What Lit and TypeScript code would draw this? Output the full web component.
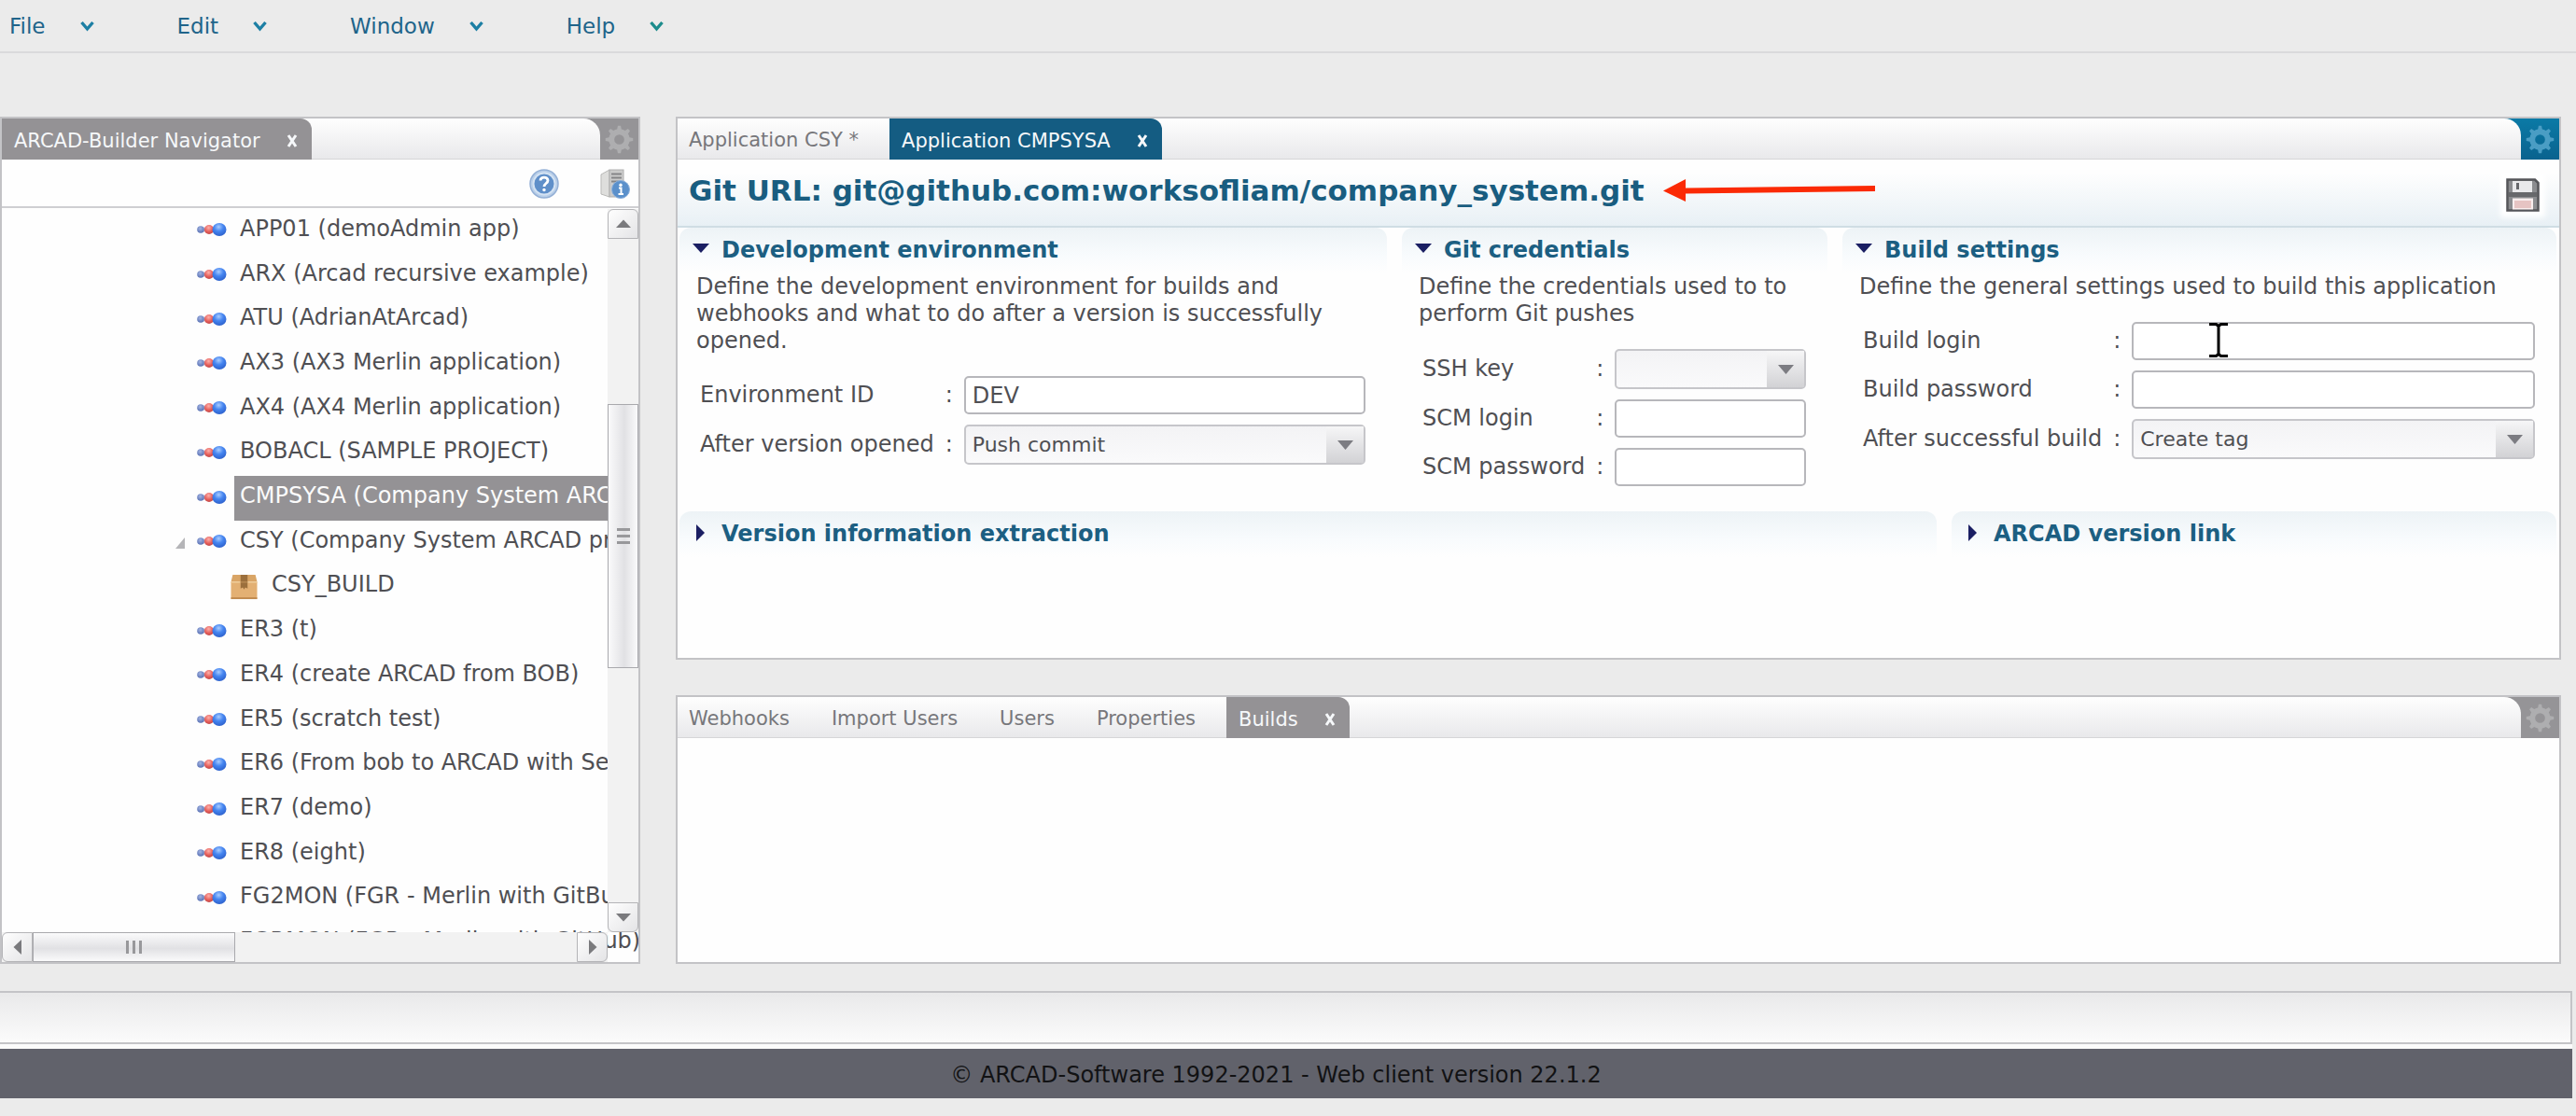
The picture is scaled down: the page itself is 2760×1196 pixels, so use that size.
import { LitElement, html, css, svg, nothing } from "lit";
import { customElement, property } from "lit/decorators.js";

const menus = ["File", "Edit", "Window", "Help"];

type Node = { label: string; icon: "app" | "box"; selected?: boolean; open?: boolean };

const nodes: Node[] = [
  { label: "APP01 (demoAdmin app)", icon: "app" },
  { label: "ARX (Arcad recursive example)", icon: "app" },
  { label: "ATU (AdrianAtArcad)", icon: "app" },
  { label: "AX3 (AX3 Merlin application)", icon: "app" },
  { label: "AX4 (AX4 Merlin application)", icon: "app" },
  { label: "BOBACL (SAMPLE PROJECT)", icon: "app" },
  { label: "CMPSYSA (Company System ARCAD)", icon: "app", selected: true },
  { label: "CSY (Company System ARCAD project)", icon: "app", open: true },
  { label: "CSY_BUILD", icon: "box" },
  { label: "ER3 (t)", icon: "app" },
  { label: "ER4 (create ARCAD from BOB)", icon: "app" },
  { label: "ER5 (scratch test)", icon: "app" },
  { label: "ER6 (From bob to ARCAD with Services)", icon: "app" },
  { label: "ER7 (demo)", icon: "app" },
  { label: "ER8 (eight)", icon: "app" },
  { label: "FG2MON (FGR - Merlin with GitBucket)", icon: "app" },
  { label: "FGRMON (FGR - Merlin with GitHub)", icon: "app" },
];

const gearTeeth = [0, 45, 90, 135, 180, 225, 270, 315];

const gearIcon = html`<svg class="gear" viewBox="0 0 32 32" aria-hidden="true">
  <circle cx="16" cy="16" r="8.5" fill="none" stroke="currentColor" stroke-width="6"></circle>
  ${gearTeeth.map(
    (a) => svg`<path d="M13.4 6 L14.4 0.8 H17.6 L18.6 6 Z" fill="currentColor" transform="rotate(${a} 16 16)"></path>`
  )}
</svg>`;

const closeIcon = html`<svg class="close" viewBox="0 0 12 14" aria-hidden="true">
  <path d="M2 1 L10 13 M10 1 L2 13" stroke="currentColor" stroke-width="3" fill="none"></path>
</svg>`;

const appIcon = html`<svg class="app-icon" viewBox="0 0 32 18" aria-hidden="true">
  <defs>
    <radialGradient id="blue" cx=".45" cy=".3" r=".75">
      <stop offset="0" stop-color="#a9ccff"></stop>
      <stop offset=".45" stop-color="#4585f0"></stop>
      <stop offset="1" stop-color="#2a5cc8"></stop>
    </radialGradient>
    <radialGradient id="red" cx=".45" cy=".3" r=".75">
      <stop offset="0" stop-color="#ffb0aa"></stop>
      <stop offset=".6" stop-color="#e45c58"></stop>
      <stop offset="1" stop-color="#b84446"></stop>
    </radialGradient>
    <radialGradient id="navy" cx=".45" cy=".35" r=".75">
      <stop offset="0" stop-color="#a3b4e2"></stop>
      <stop offset="1" stop-color="#4c65ac"></stop>
    </radialGradient>
  </defs>
  <rect x="4" y="6.500" width="20" height="5" fill="#cbbcd2"></rect>
  <circle cx="4" cy="9" r="3.800" fill="url(#navy)"></circle>
  <circle cx="13" cy="9" r="5" fill="url(#red)"></circle>
  <ellipse cx="24" cy="9" rx="7.500" ry="7" fill="url(#blue)"></ellipse>
</svg>`;

const boxIcon = html`<svg class="box-icon" viewBox="0 0 32 30" aria-hidden="true">
  <path d="M3 1 H29 L31 9 H1 Z" fill="#d9a566"></path>
  <rect x="1" y="9" width="30" height="20" rx="1" fill="#e3b073"></rect>
  <path d="M1 9.5 H31" stroke="#f0cd9b" stroke-width="1.5"></path>
  <path d="M1 28 H31" stroke="#bf884c" stroke-width="2"></path>
  <path d="M12 1 H20 V17 L17.500 15.500 L16 18 L14.500 15.500 L12 17 Z" fill="#9b6f3c"></path>
  <path d="M12 9.500 H20" stroke="#b98a52" stroke-width="1.500"></path>
</svg>`;

const helpIcon = html`<svg class="tool-icon" viewBox="0 0 32 32" aria-hidden="true">
  <circle cx="16" cy="16" r="15" fill="#b9cfe9" stroke="#94b0d6" stroke-width="1.5"></circle>
  <circle cx="16" cy="16" r="11.5" fill="#5f8fc9" stroke="#d5e3f3" stroke-width="2"></circle>
  <path d="M12 12.5 C12 8 20 8 20 12.5 C20 15.5 16 15.5 16 19" fill="none" stroke="#fff" stroke-width="2.8"></path>
  <circle cx="16" cy="22.5" r="1.7" fill="#fff"></circle>
</svg>`;

const serverIcon = html`<svg class="tool-icon" viewBox="0 0 32 32" aria-hidden="true">
  <path d="M1 6 L10 1 V30 L1 27 Z" fill="#dededc" stroke="#b9b9b7"></path>
  <rect x="10" y="1" width="15" height="29" fill="#cbcbcb" stroke="#adadad"></rect>
  <path d="M12 5.500 H23 M12 9.500 H23 M12 13.500 H23" stroke="#858587" stroke-width="1.800"></path>
  <circle cx="22" cy="22" r="9.500" fill="#5b90cb" stroke="#8db1dc" stroke-width="1"></circle>
  <circle cx="22" cy="17.300" r="1.700" fill="#fff"></circle>
  <path d="M20 20.500 H22.500 V26.500 M19.500 27 H25" stroke="#fff" stroke-width="2" fill="none"></path>
</svg>`;

const saveIcon = html`<svg class="save-icon" viewBox="0 0 36 36" aria-hidden="true">
  <path d="M1.500 1.500 H31 L34.500 5 V34.500 H1.500 Z" fill="#8b8c8f" stroke="#55565a" stroke-width="2.500"></path>
  <path d="M3 15 H33 V20 H3 Z" fill="#67686b"></path>
  <rect x="7" y="3" width="21" height="12" fill="#e9e9eb"></rect>
  <rect x="11" y="5" width="3" height="7" fill="#66676b"></rect>
  <rect x="7" y="21.500" width="22" height="12" fill="#f8eeee"></rect>
  <rect x="9" y="24" width="18" height="8" fill="#e6c4c3"></rect>
</svg>`;

const shared = css`
  :host {
    display: block;
    min-width: 0;
    min-height: 0;
    font-family: "DejaVu Sans", Verdana, sans-serif;
    color: #4f4f53;
  }
  * {
    box-sizing: border-box;
  }
  button {
    font: inherit;
    color: inherit;
    background: none;
    border: 0;
    margin: 0;
    padding: 0;
  }
  svg {
    display: block;
    flex: none;
  }
`;

@customElement("tab-panel")
export class TabPanel extends LitElement {
  @property({ attribute: false }) tabs: string[] = [];
  @property() active = "";
  @property({ type: Boolean, reflect: true }) focused = false;

  static styles = [
    shared,
    css`
      :host {
        display: flex;
        flex-direction: column;
        background: #fefefe;
        border: 2px solid #c3c3c6;
        --tone: #949295;
        --corner: #959497;
        --gear: #aeaeb0;
      }
      :host([focused]) {
        --tone: #145c82;
        --corner: linear-gradient(#0b7aa6, #0a628e);
        --gear: #4a9dc4;
      }
      .bar {
        display: flex;
        flex: none;
        height: 44px;
        background: var(--corner);
      }
      .strip {
        display: flex;
        flex: 1;
        min-width: 0;
        background: linear-gradient(#fefefe, #e9e9eb);
        border-bottom: 1px solid #d6d6d8;
        border-top-right-radius: 18px;
      }
      .tab {
        height: 44px;
        padding: 2px 33px 0 12px;
        font-size: 21px;
        color: #77777b;
        white-space: nowrap;
      }
      .current {
        display: flex;
        align-items: center;
        gap: 28px;
        height: 44px;
        padding: 4px 15px 0 13px;
        background: var(--tone);
        border-top-right-radius: 12px;
        color: #f6f8fa;
        font-size: 21px;
        white-space: nowrap;
      }
      .close {
        width: 12px;
        height: 14px;
      }
      .corner {
        display: grid;
        place-items: center;
        width: 41px;
        height: 44px;
        color: var(--gear);
      }
      .gear {
        width: 31px;
        height: 31px;
      }
      .body {
        flex: 1;
        display: flex;
        flex-direction: column;
        min-height: 0;
      }
    `,
  ];

  render() {
    return html`
      <div class="bar">
        <div class="strip" role="tablist">
          ${this.tabs.map((t) =>
            t === this.active
              ? html`<div class="current">
                  <button role="tab" aria-selected="true">${t}</button>
                  <button aria-label="Close ${t}">${closeIcon}</button>
                </div>`
              : html`<button class="tab" role="tab" aria-selected="false">${t}</button>`
          )}
        </div>
        <button class="corner" aria-label="Configure">${gearIcon}</button>
      </div>
      <div class="body"><slot></slot></div>
    `;
  }
}

@customElement("app-tree")
export class AppTree extends LitElement {
  static styles = [
    shared,
    css`
      :host {
        display: flex;
        flex-direction: column;
        flex: 1;
      }
      .tools {
        display: flex;
        flex: none;
        justify-content: flex-end;
        align-items: center;
        gap: 44px;
        height: 52px;
        padding: 2px 9px 0 0;
        border-bottom: 2px solid #cfcfd2;
      }
      .tool-icon {
        width: 32px;
        height: 32px;
      }
      .view {
        position: relative;
        flex: 1;
        min-height: 0;
        overflow: hidden;
      }
      .list {
        display: grid;
        grid-auto-rows: 1fr;
        height: calc(100% + 4px);
        margin: 0;
        padding: 1px 0 0;
        list-style: none;
        font-size: 24px;
      }
      .node {
        display: flex;
        align-items: center;
        min-height: 0;
        padding-left: 186px;
        white-space: nowrap;
      }
      .twist {
        width: 10px;
        height: 12px;
        margin-right: 13px;
      }
      .child {
        padding-left: 221px;
      }
      .app-icon {
        width: 32px;
        height: 18px;
        margin-bottom: 3px;
      }
      .box-icon {
        width: 31px;
        height: 28px;
      }
      .label {
        display: flex;
        align-items: center;
        align-self: stretch;
        flex: 1;
        margin-left: 8px;
        padding: 0 0 6px 6px;
      }
      .selected {
        background: #949295;
        color: #fbfbfb;
      }
      .vbar,
      .hbar {
        position: absolute;
        display: flex;
        background: #f2f2f2;
      }
      .vbar {
        flex-direction: column;
        top: 1px;
        right: 0;
        bottom: 32px;
        width: 33px;
      }
      .hbar {
        left: 0;
        right: 33px;
        bottom: 0;
        height: 32px;
      }
      .step {
        display: grid;
        place-items: center;
        flex: none;
        width: 33px;
        height: 32px;
        border: 1px solid #b4b4b7;
        background: linear-gradient(135deg, #fefefe, #e4e4e6);
      }
      .up {
        border-radius: 6px 6px 0 0;
      }
      .down {
        border-radius: 0 0 6px 6px;
      }
      .left {
        border-radius: 6px 0 0 6px;
      }
      .right {
        border-radius: 0 6px 6px 0;
      }
      .step svg {
        width: 18px;
        height: 18px;
      }
      .before {
        flex: 178;
      }
      .thumb-y {
        flex: 282;
      }
      .after {
        flex: 252;
      }
      .thumb-x {
        flex: 217;
      }
      .rest {
        flex: 369;
      }
      .thumb-x,
      .thumb-y {
        display: grid;
        place-items: center;
        border: 1px solid #a9a9ad;
      }
      .thumb-y {
        background: linear-gradient(90deg, #fafafb, #e1e1e4 55%, #fafafb);
      }
      .thumb-x {
        background: linear-gradient(#fafafb, #e1e1e4 55%, #fafafb);
      }
      .grip-y {
        width: 14px;
        height: 18px;
        background: repeating-linear-gradient(#98989b 0 3px, transparent 3px 7px);
      }
      .grip-x {
        width: 18px;
        height: 14px;
        background: repeating-linear-gradient(90deg, #98989b 0 3px, transparent 3px 7px);
      }
    `,
  ];

  private arrow(angle: number) {
    return html`<svg viewBox="0 0 18 18" aria-hidden="true">
      <path d="M1 13 L9 4.500 L17 13 Z" fill="#7a7a7d" transform="rotate(${angle} 9 9)"></path>
    </svg>`;
  }

  render() {
    return html`
      <div class="tools">
        <button aria-label="Help">${helpIcon}</button>
        <button aria-label="Server information">${serverIcon}</button>
      </div>
      <div class="view">
        <ul class="list" role="tree">
          ${nodes.map(
            (n) => html`<li class="node ${n.icon === "box" ? "child" : ""}" role="treeitem">
              <svg class="twist" viewBox="0 0 10 12" aria-hidden="true">
                ${n.open ? svg`<path d="M10 0 V12 H0 Z" fill="#b5b5b8"></path>` : nothing}
              </svg>
              ${n.icon === "app" ? appIcon : boxIcon}
              <span class="label ${n.selected ? "selected" : ""}">${n.label}</span>
            </li>`
          )}
        </ul>
        <div class="vbar">
          <button class="step up" aria-label="Scroll up">${this.arrow(0)}</button>
          <div class="before"></div>
          <div class="thumb-y"><span class="grip-y"></span></div>
          <div class="after"></div>
          <button class="step down" aria-label="Scroll down">${this.arrow(180)}</button>
        </div>
        <div class="hbar">
          <button class="step left" aria-label="Scroll left">${this.arrow(270)}</button>
          <div class="thumb-x"><span class="grip-x"></span></div>
          <div class="rest"></div>
          <button class="step right" aria-label="Scroll right">${this.arrow(90)}</button>
        </div>
      </div>
    `;
  }
}

type Field = { id: string; label: string; type: "text" | "password" | "select"; value?: string; caret?: boolean };

@customElement("form-section")
export class FormSection extends LitElement {
  @property() heading = "";
  @property() description = "";
  @property({ type: Boolean }) open = false;
  @property({ attribute: false }) fields: Field[] = [];

  static styles = [
    shared,
    css`
      .head {
        display: flex;
        align-items: center;
        gap: 13px;
        width: 100%;
        height: 49px;
        padding: 0 0 2px 14px;
        background: linear-gradient(#edf3f6, #f8fbfd 60%, #fefefe);
        border-radius: 12px 12px 0 0;
        color: #1c5f82;
        font-size: 24px;
        font-weight: bold;
        text-align: left;
      }
      .mark {
        width: 18px;
        height: 18px;
        margin-bottom: 2px;
      }
      .text {
        margin: 0 24px 23px 18px;
        font-size: 24px;
        line-height: 29px;
      }
      .fields {
        display: grid;
        grid-template-columns: max-content max-content minmax(0, 1fr);
        gap: 11px 12px;
        align-items: center;
        padding: 0 23px 0 22px;
        font-size: 24px;
      }
      .fields label,
      .colon {
        padding-bottom: 2px;
      }
      .control {
        position: relative;
        display: flex;
      }
      .input,
      .select {
        width: 100%;
        margin: 0;
        border: 2px solid #b7b7bb;
        border-radius: 5px;
        color: #4f4f53;
        font-family: inherit;
        outline: none;
      }
      .input {
        height: 41px;
        padding: 0 7px;
        background: #fff;
        font-size: 24px;
      }
      .select {
        appearance: none;
        height: 43px;
        padding: 0 48px 0 7px;
        background: linear-gradient(#f3f3f5, #fafafb);
        border-color: #c6c6ca;
        font-size: 22px;
      }
      .drop {
        position: absolute;
        top: 2px;
        right: 2px;
        display: grid;
        place-items: center;
        width: 40px;
        height: 39px;
        background: linear-gradient(#f6f6f7, #d2d2d5);
        pointer-events: none;
      }
      .drop svg {
        width: 17px;
        height: 10px;
      }
      .caret {
        position: absolute;
        top: 1px;
        left: 83px;
        width: 20px;
        height: 37px;
      }
    `,
  ];

  private control(f: Field) {
    if (f.type === "select") {
      return html`<select class="select" id=${f.id}>
          <option>${f.value ?? ""}</option>
        </select>
        <span class="drop">
          <svg viewBox="0 0 17 10" aria-hidden="true"><path d="M0 0 H17 L8.5 10 Z" fill="#7c7c82"></path></svg>
        </span>`;
    }
    return html`<input class="input" id=${f.id} type=${f.type} .value=${f.value ?? ""} />
      ${f.caret
        ? html`<svg class="caret" viewBox="0 0 20 37" aria-hidden="true">
            <path
              d="M0 1.500 H7.500 L10 3.500 L12.500 1.500 H20 M0 35.500 H7.500 L10 33.500 L12.500 35.500 H20 M10 3 V34"
              fill="none"
              stroke="#000"
              stroke-width="3"
            ></path>
          </svg>`
        : nothing}`;
  }

  render() {
    return html`
      <button class="head" aria-expanded=${this.open ? "true" : "false"}>
        <svg class="mark" viewBox="0 0 18 18" aria-hidden="true">
          <path d=${this.open ? "M0 3 H18 L9 13 Z" : "M4 0 L13 9 L4 18 Z"} fill="#1b1f63"></path>
        </svg>
        <span>${this.heading}</span>
      </button>
      ${this.open
        ? html`<p class="text">${this.description}</p>
            <div class="fields">
              ${this.fields.map(
                (f) => html`<label for=${f.id}>${f.label}</label><span class="colon">:</span>
                  <div class="control">${this.control(f)}</div>`
              )}
            </div>`
        : nothing}
    `;
  }
}

@customElement("app-root")
export class AppRoot extends LitElement {
  static styles = [
    shared,
    css`
      :host {
        display: flex;
        flex-direction: column;
        height: 100vh;
        background: #ebebeb;
      }
      .menu {
        display: flex;
        flex: none;
        align-items: center;
        gap: 89px;
        height: 57px;
        padding: 0 10px;
        border-bottom: 2px solid #dadadb;
      }
      .entry {
        display: flex;
        align-items: center;
        gap: 37px;
        color: #20648a;
        font-size: 23px;
      }
      .chevron {
        width: 15px;
        height: 12px;
        color: #1c7fa4;
      }
      .entry:last-child .chevron {
        color: #1c8c8c;
      }
      .work {
        display: grid;
        flex: 1;
        grid-template-columns: minmax(0, 686fr) minmax(0, 2020fr);
        grid-template-rows: minmax(0, 582fr) minmax(0, 288fr);
        gap: 38px;
        min-height: 0;
        padding: 68px 16px 29px 0;
      }
      .nav {
        grid-row: 1 / 3;
      }
      .title-row {
        display: flex;
        flex: none;
        align-items: center;
        height: 73px;
        padding: 0 21px 0 12px;
        background: linear-gradient(#fefefe 20%, #e8f0f5);
        border-bottom: 2px solid #cfdde4;
      }
      .title {
        margin: 0;
        padding-bottom: 5px;
        color: #195d80;
        font-size: 31px;
        line-height: 36px;
        white-space: nowrap;
      }
      .pointer {
        width: 228px;
        height: 24px;
        margin: 0 0 6px 20px;
      }
      .save {
        margin: 4px 0 0 auto;
        background: #fff;
        box-shadow: 0 0 6px 6px #fff;
      }
      .save-icon {
        width: 36px;
        height: 36px;
      }
      .row {
        display: grid;
        gap: 16px;
        padding: 0 3px 0 2px;
      }
      .three {
        grid-template-columns: minmax(0, 758fr) minmax(0, 456fr) minmax(0, 765fr);
        min-height: 304px;
      }
      .two {
        grid-template-columns: minmax(0, 1347fr) minmax(0, 648fr);
      }
      .status {
        flex: none;
        height: 57px;
        margin-right: 4px;
        border: 2px solid #c4c4c7;
        border-left: 0;
        background: linear-gradient(#e9e9ea, #fbfbfb);
      }
      .footer {
        flex: none;
        height: 58px;
        margin: 0 4px 19px 0;
        padding-right: 22px;
        border-top: 5px solid #fbfbfb;
        background: #61626b;
        color: #121214;
        font-size: 24px;
        line-height: 57px;
        text-align: center;
      }
    `,
  ];

  render() {
    return html`
      <nav class="menu">
        ${menus.map(
          (m) => html`<button class="entry">
            ${m}
            <svg class="chevron" viewBox="0 0 15 12" aria-hidden="true">
              <path d="M1.500 2 L7.500 9 L13.500 2" fill="none" stroke="currentColor" stroke-width="3.400"></path>
            </svg>
          </button>`
        )}
      </nav>
      <main class="work">
        <tab-panel class="nav" .tabs=${["ARCAD-Builder Navigator"]} active="ARCAD-Builder Navigator">
          <app-tree></app-tree>
        </tab-panel>
        <tab-panel focused .tabs=${["Application CSY *", "Application CMPSYSA"]} active="Application CMPSYSA">
          <header class="title-row">
            <h1 class="title">Git URL: git@github.com:worksofliam/company_system.git</h1>
            <svg class="pointer" viewBox="0 0 228 24" aria-hidden="true">
              <path d="M0 12.500 L24 0 V9.500 L227 7 V13 L24 15.500 V24 Z" fill="#fb2a05"></path>
            </svg>
            <button class="save" aria-label="Save">${saveIcon}</button>
          </header>
          <div class="row three">
            <form-section
              open
              heading="Development environment"
              description="Define the development environment for builds and webhooks and what to do after a version is successfully opened."
              .fields=${[
                { id: "env", label: "Environment ID", type: "text", value: "DEV" },
                { id: "after-open", label: "After version opened", type: "select", value: "Push commit" },
              ]}
            ></form-section>
            <form-section
              open
              heading="Git credentials"
              description="Define the credentials used to to perform Git pushes"
              .fields=${[
                { id: "ssh", label: "SSH key", type: "select" },
                { id: "scm-login", label: "SCM login", type: "text" },
                { id: "scm-password", label: "SCM password", type: "password" },
              ]}
            ></form-section>
            <form-section
              open
              heading="Build settings"
              description="Define the general settings used to build this application"
              .fields=${[
                { id: "login", label: "Build login", type: "text", caret: true },
                { id: "password", label: "Build password", type: "password" },
                { id: "after-build", label: "After successful build", type: "select", value: "Create tag" },
              ]}
            ></form-section>
          </div>
          <div class="row two">
            <form-section heading="Version information extraction"></form-section>
            <form-section heading="ARCAD version link"></form-section>
          </div>
        </tab-panel>
        <tab-panel .tabs=${["Webhooks", "Import Users", "Users", "Properties", "Builds"]} active="Builds"></tab-panel>
      </main>
      <div class="status"></div>
      <footer class="footer">© ARCAD-Software 1992-2021 - Web client version 22.1.2</footer>
    `;
  }
}
